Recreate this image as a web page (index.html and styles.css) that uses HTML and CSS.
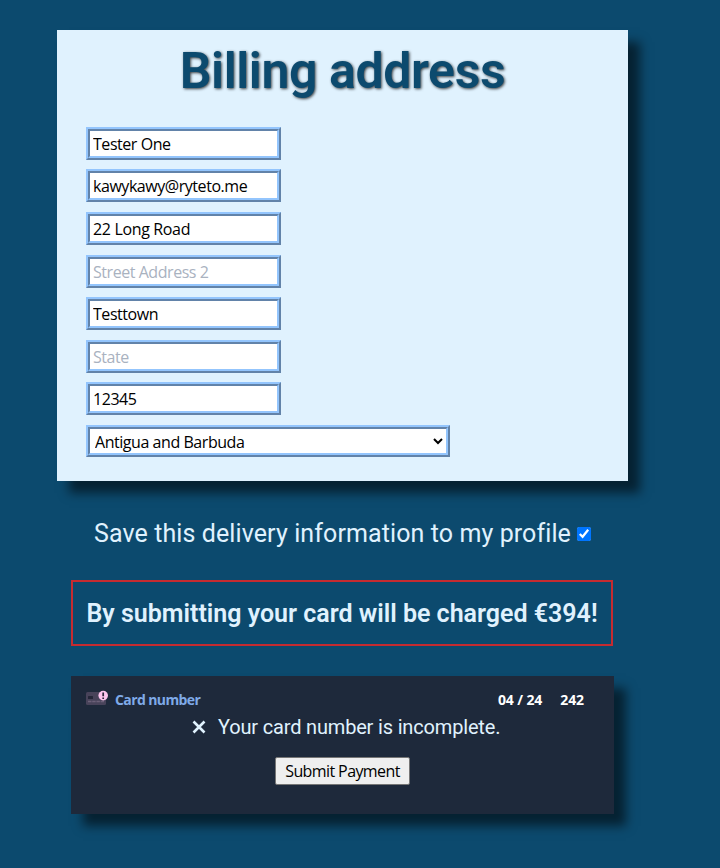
FILE: index.html
```
<!DOCTYPE html>
<html lang="en">
<head>
<meta charset="utf-8">
<title>Billing address</title>
<link rel="stylesheet" href="styles.css">
</head>
<body>
<form class="checkout">
  <section class="billing">
    <h1 class="title">Billing address</h1>
    <div class="fields">
      <input class="field" type="text" value="Tester One">
      <input class="field" type="text" value="kawykawy@ryteto.me">
      <input class="field street" type="text" value="22 Long Road">
      <input class="field" type="text" placeholder="Street Address 2">
      <input class="field" type="text" value="Testtown">
      <input class="field" type="text" placeholder="State">
      <input class="field" type="text" value="12345">
      <select class="field country"><option>Antigua and Barbuda</option></select>
    </div>
  </section>
  <label class="save"><span>Save this delivery information to my profile</span><input type="checkbox" checked></label>
  <p class="charge">By submitting your card will be charged €394!</p>
  <section class="payment">
    <div class="card-row">
      <svg class="card-icon" width="23" height="16" viewBox="0 0 23 16">
        <rect x="0" y="2" width="20" height="13" rx="1.5" fill="#48435a"/>
        <rect x="2" y="6" width="5" height="3" rx=".5" fill="#242638"/>
        <path d="M2 11.5h16" stroke="#6b6078" stroke-width="1.5" stroke-dasharray="3.5 .7"/>
        <circle cx="17.2" cy="5.6" r="4.8" fill="#fdc5ee"/>
        <path d="M17.2 2.5v3.8M17.2 7.4v1.5" stroke="#2b2439" stroke-width="1.7"/>
      </svg>
      <span class="number">Card number</span>
      <span class="expiry">04 / 24</span>
      <span class="cvc">242</span>
    </div>
    <div class="error">
      <svg width="14" height="14" viewBox="0 0 14 14"><path d="M1.5 1.5l11 11M12.5 1.5l-11 11" stroke="#e0f2fe" stroke-width="2.6"/></svg>
      <span>Your card number is incomplete.</span>
    </div>
    <button class="submit" type="button">Submit Payment</button>
  </section>
</form>
</body>
</html>
```
FILE: styles.css
```
* { box-sizing: border-box; }
body {
  margin: 0;
  min-height: 868px;
  background: #0c4a6e;
  color: #e0f2fe;
  font-family: Roboto, "Liberation Sans", sans-serif;
}
.checkout { padding: 30px 0 0 57px; }
.billing {
  width: 571px;
  height: 451px;
  background: #e0f2fe;
  box-shadow: 12px 12px 10px rgba(0, 0, 0, .55);
}
.title {
  margin: 0;
  height: 96.8px;
  padding-top: 10px;
  color: #0c4a6e;
  font-size: 50px;
  line-height: 62px;
  font-weight: 600;
  letter-spacing: -.4px;
  text-align: center;
  white-space: nowrap;
  text-shadow: 1px 1px 3px rgba(0, 0, 0, .75);
}
.fields {
  display: flex;
  flex-direction: column;
  align-items: flex-start;
  gap: 9.6px;
  padding-left: 29px;
}
.field {
  width: 195px;
  height: 33px;
  margin: 0;
  padding: 1px 3px 0;
  border: 4px ridge #93c5fd;
  background: #fff;
  color: #000;
  font: 16px "Open Sans", sans-serif;
  letter-spacing: -.45px;
}
.field::placeholder { color: #a9b2bf; }
.street { letter-spacing: -.35px; }
.country { width: 364px; height: 32px; padding: 1px 3px 0 1px; border-radius: 0; }
.save {
  display: flex;
  align-items: center;
  height: 30px;
  margin: 37px 0 0 37px;
  font-size: 25px;
  letter-spacing: .1px;
  white-space: nowrap;
}
.save input { width: 14px; height: 14px; margin: 1px 0 0 6px; accent-color: #0075ff; }
.charge {
  width: 542px;
  height: 66px;
  margin: 32px 0 30px 14px;
  border: 2px solid #c62b30;
  font-size: 25px;
  line-height: 63px;
  font-weight: 600;
  text-align: center;
  white-space: nowrap;
}
.payment {
  width: 543px;
  height: 138px;
  margin-left: 14px;
  padding-top: 14px;
  background: #1e293b;
  box-shadow: 12px 12px 10px rgba(0, 0, 0, .55);
}
.card-row {
  display: flex;
  align-items: center;
  height: 20px;
  padding: 0 30px 0 15px;
  font: 700 14px/20px "Open Sans", sans-serif;
  letter-spacing: -.1px;
  color: #fff;
}
.card-icon { margin: -4px 6px 0 0; }
.number { color: #7faae8; letter-spacing: -.6px; }
.expiry { margin-left: auto; margin-right: 18px; }
.error {
  display: flex;
  align-items: center;
  gap: 12px;
  height: 28px;
  margin: 3px 0 0 121px;
  font-size: 20px;
  letter-spacing: -.17px;
  white-space: nowrap;
}
.submit {
  display: block;
  width: 135px;
  height: 28px;
  margin: 16px 0 0 204px;
  padding: 0;
  border: 1px solid #767676;
  border-radius: 2px;
  background: #efefef;
  color: #000;
  font: 16px "Open Sans", sans-serif;
  letter-spacing: -.6px;
}
```
